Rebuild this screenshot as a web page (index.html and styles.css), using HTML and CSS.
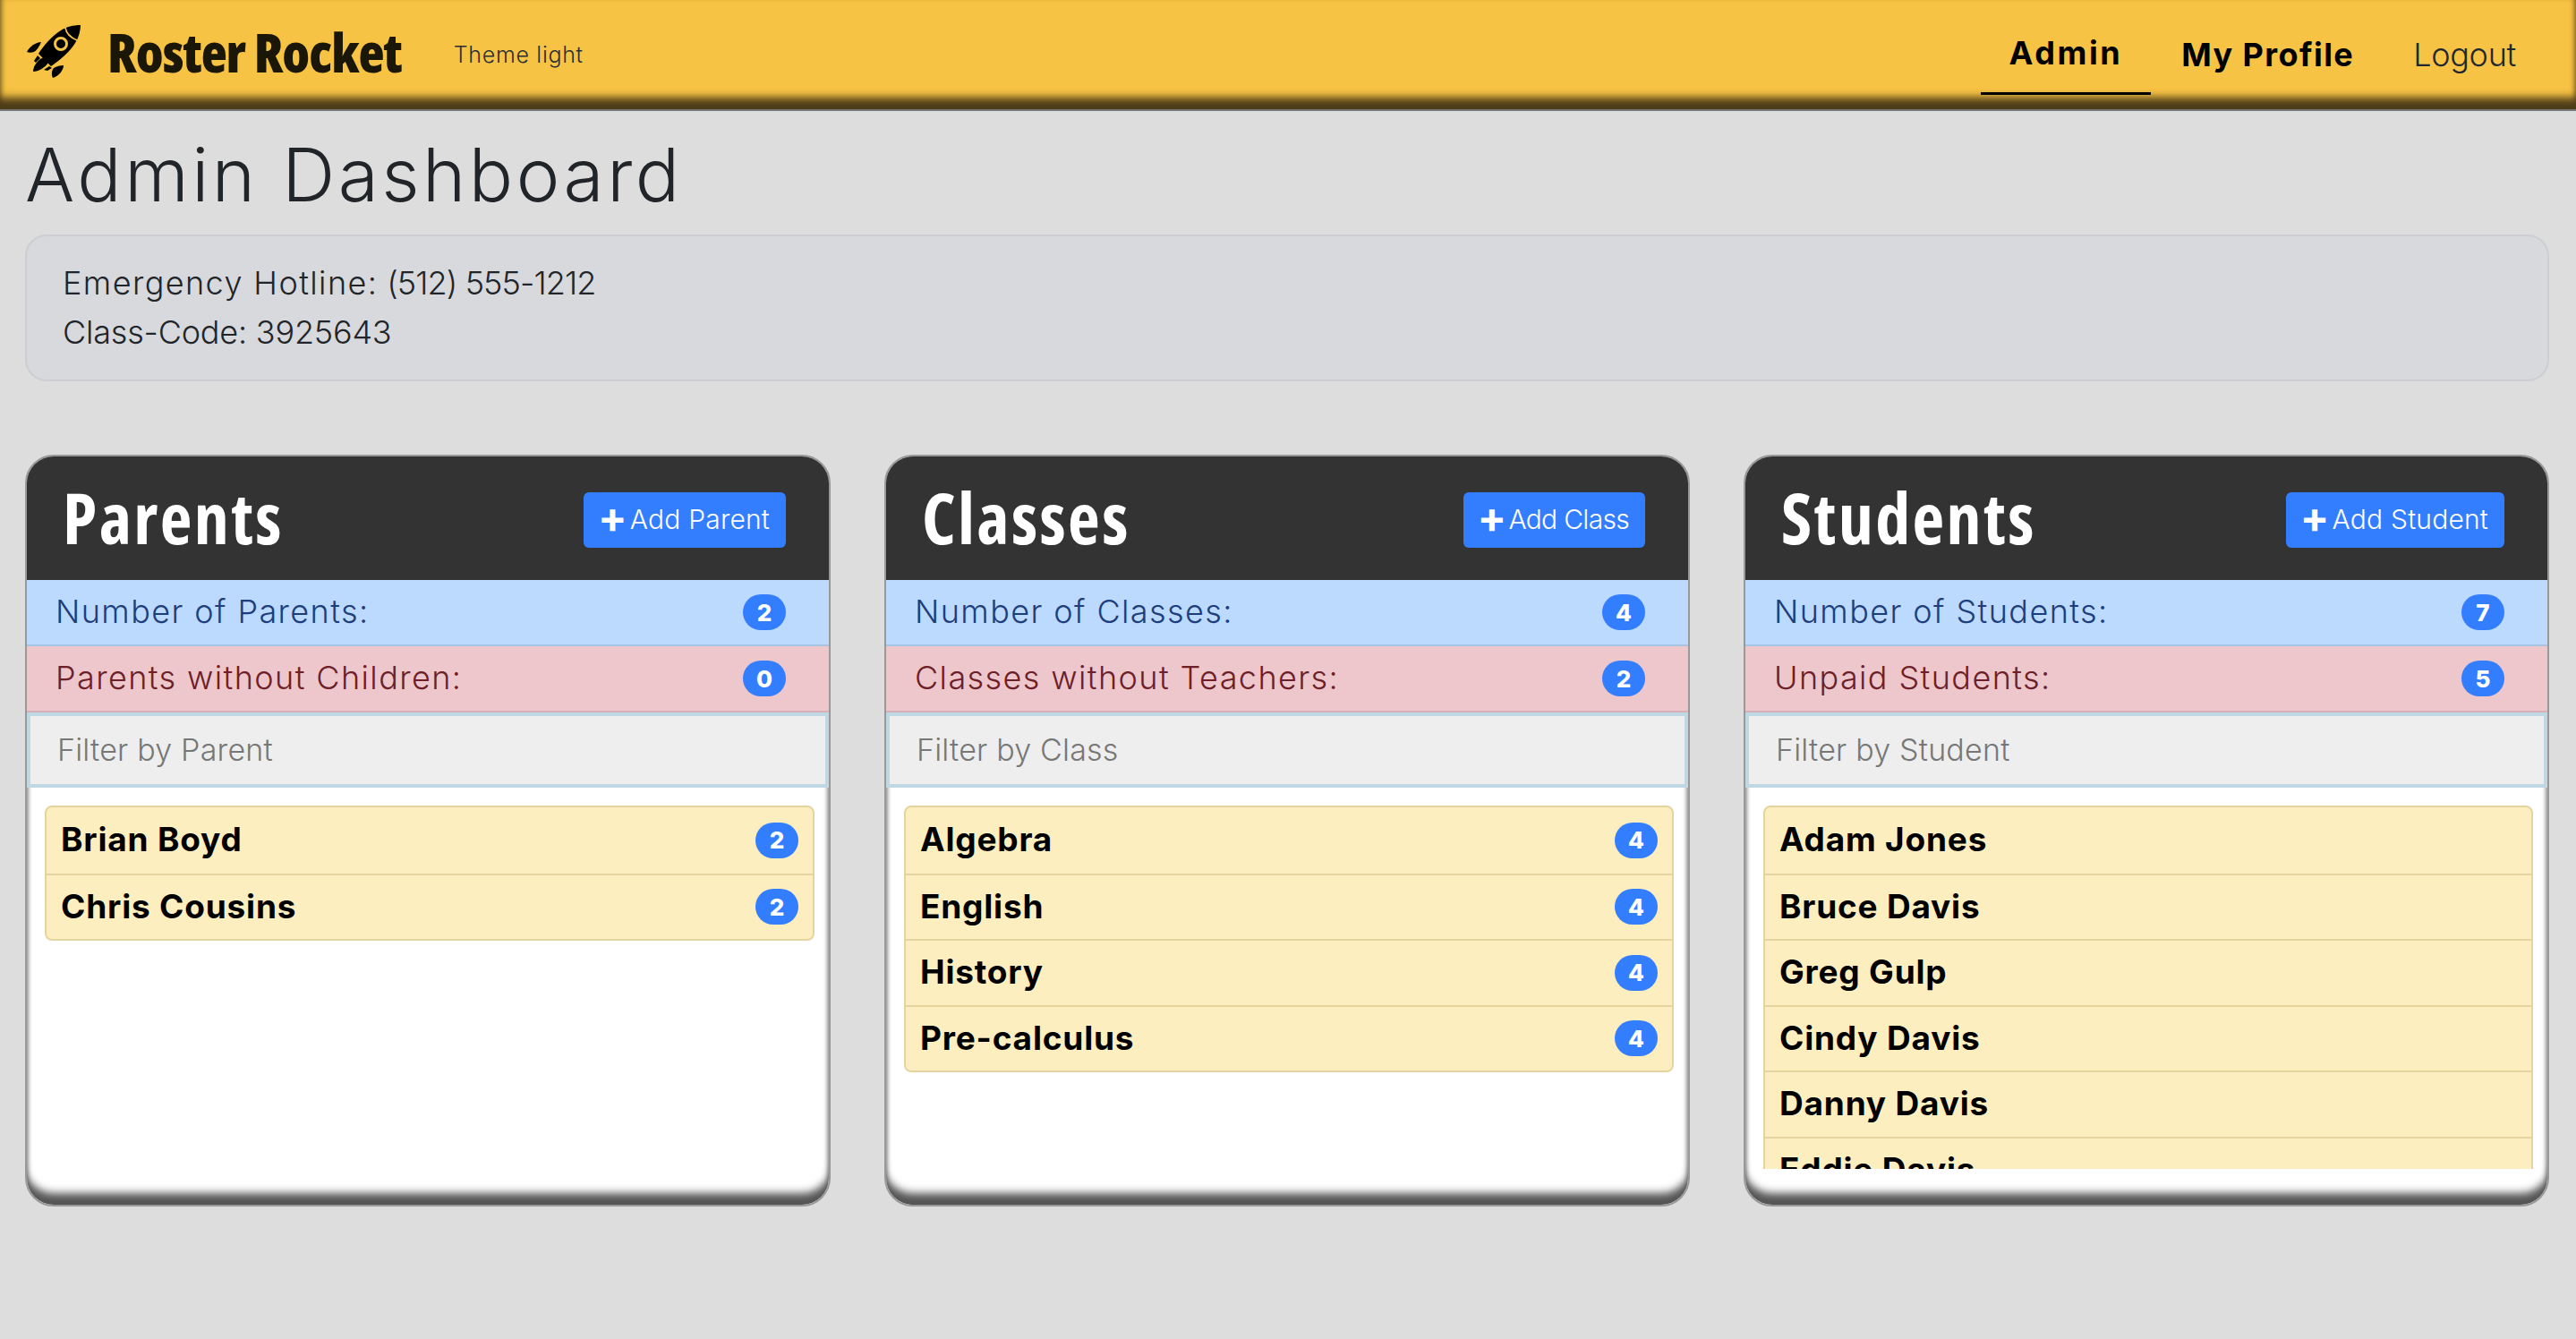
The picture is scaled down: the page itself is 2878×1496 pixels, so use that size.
FILE: index.html
```html
<!DOCTYPE html>
<html lang="en">
<head>
  <meta charset="UTF-8">
  <title>Roster Rocket</title>
  <link rel="stylesheet" href="styles.css">
</head>
<body>

<nav class="topbar">
  <svg class="logo" viewBox="0 0 60 60" width="60" height="60">
    <path d="M60 0C52 0 44 2 38 6C28 12 18 24 13 32L27 46C36 40 48 30 54 20C58 14 60 6 60 0Z" fill="#000"/>
    <path d="M43 3C44 9 49 14 56 17" fill="none" stroke="#f7c344" stroke-width="1.6"/>
    <circle cx="38" cy="21" r="6.5" fill="#000" stroke="#f7c344" stroke-width="3"/>
    <path d="M0 30C3 24 10 19 16 19C14 24 11 28 8 30C5 31 2 31 0 30Z" fill="#000"/>
    <path d="M29 59C27 55 28 50 30 48C33 46 38 45 41 45C41 50 36 57 29 59Z" fill="#000"/>
    <path d="M7 52C7 46 13 37 20 36C23 38 25 41 24 42C21 47 13 52 7 52Z" fill="#000"/>
    <path d="M8 40L12 34L15 37L10 42Z" fill="#000"/>
    <path d="M19 50L25 46L28 48L23 51Z" fill="#000"/>
  </svg>
  <span class="brand">Roster Rocket</span>
  <span class="theme">Theme light</span>
  <div class="navlinks">
    <a class="navlink active">Admin</a>
    <a class="navlink bold">My Profile</a>
    <a class="navlink">Logout</a>
  </div>
</nav>

<main class="page">
  <h1>Admin Dashboard</h1>

  <div class="info">
    <div><span class="info-label">Emergency Hotline:</span> <span class="info-num">(512) 555-1212</span></div>
    <div>Class-Code: 3925643</div>
  </div>

  <div class="cards">

    <section class="card">
      <header class="card-head">
        <h2>Parents</h2>
        <button class="add"><span class="plus">+</span>Add Parent</button>
      </header>
      <div class="stat blue"><span>Number of Parents:</span><span class="badge">2</span></div>
      <div class="stat red"><span>Parents without Children:</span><span class="badge">0</span></div>
      <input class="filter" placeholder="Filter by Parent">
      <div class="card-body">
        <ul class="list">
          <li><span>Brian Boyd</span><span class="badge">2</span></li>
          <li><span>Chris Cousins</span><span class="badge">2</span></li>
        </ul>
      </div>
    </section>

    <section class="card">
      <header class="card-head">
        <h2>Classes</h2>
        <button class="add tight"><span class="plus">+</span>Add Class</button>
      </header>
      <div class="stat blue"><span>Number of Classes:</span><span class="badge">4</span></div>
      <div class="stat red"><span>Classes without Teachers:</span><span class="badge">2</span></div>
      <input class="filter" placeholder="Filter by Class">
      <div class="card-body">
        <ul class="list">
          <li><span>Algebra</span><span class="badge">4</span></li>
          <li><span>English</span><span class="badge">4</span></li>
          <li><span>History</span><span class="badge">4</span></li>
          <li><span>Pre-calculus</span><span class="badge">4</span></li>
        </ul>
      </div>
    </section>

    <section class="card">
      <header class="card-head">
        <h2>Students</h2>
        <button class="add"><span class="plus">+</span>Add Student</button>
      </header>
      <div class="stat blue"><span>Number of Students:</span><span class="badge">7</span></div>
      <div class="stat red"><span>Unpaid Students:</span><span class="badge">5</span></div>
      <input class="filter" placeholder="Filter by Student">
      <div class="card-body">
        <ul class="list">
          <li><span>Adam Jones</span></li>
          <li><span>Bruce Davis</span></li>
          <li><span>Greg Gulp</span></li>
          <li><span>Cindy Davis</span></li>
          <li><span>Danny Davis</span></li>
          <li><span>Eddie Davis</span></li>
        </ul>
      </div>
    </section>

  </div>
</main>

</body>
</html>
```

FILE: styles.css
```css
* {
  box-sizing: border-box;
}
html, body {
  height: 100%;
}
body {
  margin: 0;
  background: #ddd;
  color: #212529;
  font-family: Inter, 'Open Sans', sans-serif;
  font-weight: 300;
  overflow: hidden;
}
.topbar {
  height: 124px;
  background: #f7c344;
  border-bottom: 2px solid #777;
  box-shadow: inset 0 -17px 10px -4px #4c3c18, inset 6px 0 6px -5px #7a6126, inset -6px 0 6px -5px #7a6126;
  display: flex;
  align-items: center;
  padding: 0 67px 0 30px;
}
.logo {
  flex: none;
  margin-bottom: 6px;
}
.brand {
  margin-left: 30px;
  font-family: 'Open Sans', sans-serif;
  font-stretch: 75%;
  font-weight: 800;
  font-size: 60px;
  letter-spacing: -1px;
  color: #1a1608;
  margin-bottom: 6px;
}
.theme {
  margin-left: 58px;
  font-size: 25px;
  color: #2b2f36;
  letter-spacing: 0.7px;
}
.navlinks {
  margin-left: auto;
  display: flex;
  align-items: center;
  gap: 66px;
}
.navlink {
  font-size: 36px;
  color: #1f2733;
  letter-spacing: -0.3px;
}
.navlink.bold {
  font-weight: 700;
  color: #000;
  letter-spacing: 1.4px;
}
.navlink.active {
  font-weight: 700;
  color: #000;
  letter-spacing: 2.6px;
  padding: 14px 32px 22px;
  border-bottom: 3px solid #000;
  margin-top: 6px;
  margin-right: -32px;
}
.page {
  padding: 0 30px 0 28px;
}
h1 {
  margin: 26px 0 0;
  font-size: 82px;
  line-height: 92px;
  font-weight: 300;
  color: #212529;
  letter-spacing: 3.5px;
}
.info {
  margin-top: 20px;
  height: 164px;
  padding: 25px 40px;
  background: #d7d9dc;
  border: 2px solid #ccced1;
  border-radius: 24px;
  font-size: 36px;
  line-height: 55px;
  letter-spacing: -0.2px;
}
.info-label {
  letter-spacing: 1.4px;
}
.info-num {
  letter-spacing: -0.9px;
}
.cards {
  margin-top: 82px;
  display: grid;
  grid-template-columns: repeat(3, 1fr);
  gap: 60px;
}
.card {
  height: 840px;
  background: #fff;
  border: 2px solid #999;
  border-radius: 32px;
  overflow: hidden;
  box-shadow: inset 0 -17px 10px -4px #555, inset 5px 0 5px -4px #888, inset -5px 0 5px -4px #888;
  display: flex;
  flex-direction: column;
}
.card-head {
  flex: none;
  height: 138px;
  background: #333;
  display: flex;
  align-items: center;
  justify-content: space-between;
  padding: 4px 48px 0 40px;
}
h2 {
  margin: 0 0 6px;
  font-family: 'Open Sans', sans-serif;
  font-stretch: 87%;
  font-weight: 700;
  font-size: 78px;
  color: #fff;
  letter-spacing: 2.4px;
}
.add {
  height: 62px;
  padding: 0 18px 2px;
  border: none;
  border-radius: 6px;
  background: #337eff;
  color: #fff;
  font-family: inherit;
  font-weight: 300;
  font-size: 30px;
  letter-spacing: 0.2px;
  display: flex;
  align-items: center;
}
.add.tight {
  letter-spacing: -0.7px;
}
.plus {
  font-weight: 700;
  font-size: 48px;
  line-height: 1;
  margin: -4px 3px 0 -2px;
}
.stat {
  flex: none;
  height: 74px;
  display: flex;
  align-items: center;
  justify-content: space-between;
  padding: 0 48px 2px 32px;
  font-size: 36px;
  letter-spacing: 1.4px;
}
.stat.blue {
  background: #bcd9fe;
  color: #1c3f7c;
  border-bottom: 2px solid #a6c3e4;
}
.stat.red {
  background: #eec7cc;
  color: #6d2027;
  border-bottom: 2px solid #d6b0b6;
}
.badge {
  min-width: 48px;
  height: 40px;
  margin-top: 2px;
  padding: 0 14px;
  border-radius: 20px;
  background: #337eff;
  color: #fff;
  font-weight: 800;
  font-size: 26px;
  letter-spacing: 0;
  display: flex;
  align-items: center;
  justify-content: center;
}
.filter {
  flex: none;
  height: 84px;
  width: 100%;
  padding: 0 30px 2px;
  background: #eee;
  border: 4px solid #c0d8e4;
  outline: none;
  font-family: inherit;
  font-weight: 300;
  font-size: 34px;
  letter-spacing: 0.2px;
}
.filter::placeholder {
  color: #777;
  opacity: 1;
}
.card-body {
  flex: 1;
  min-height: 0;
  margin: 20px 16px 40px 20px;
  overflow: hidden;
}
.list {
  list-style: none;
  margin: 0;
  padding: 0;
  background: #fdeebf;
  border: 2px solid #e6d4a0;
  border-radius: 8px;
}
.list li {
  height: 73.5px;
  padding: 0 16px 2px;
  display: flex;
  align-items: center;
  justify-content: space-between;
  font-size: 37px;
  font-weight: 700;
  color: #000;
  letter-spacing: 0.8px;
}
.list li + li {
  border-top: 2px solid #e6d4a0;
}
```
